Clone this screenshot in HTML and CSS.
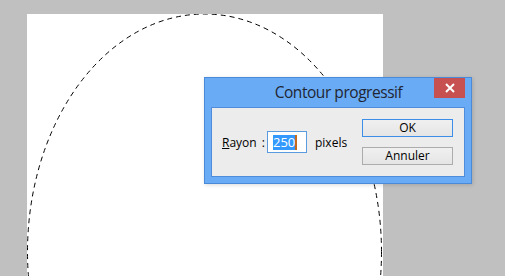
FILE: index.html
```html
<!doctype html>
<html>
  <head>
    <meta charset="UTF-8" />
    <link rel="stylesheet" href="styles.css">
  </head>
  <body>
    <div class="workspace">
      <div class="document">
        <svg class="selection" width="356" height="262" viewBox="0 0 356 262">
          <ellipse cx="177.5" cy="238" rx="177" ry="238" fill="none" stroke="#000" stroke-width="1" stroke-dasharray="5 4" />
        </svg>
      </div>
    </div>
    <div class="dialog">
      <div class="titlebar">
        <div class="title">Contour progressif</div>
        <div class="close">
          <svg width="10" height="10" viewBox="0 0 10 10">
            <path d="M1 1 L9 9 M9 1 L1 9" stroke="#fff" stroke-width="2" />
          </svg>
        </div>
      </div>
      <div class="panel">
        <label class="field-label"><u>R</u>ayon&nbsp;:</label>
        <div class="field-input"><span class="selected">250</span><span class="caret"></span></div>
        <div class="field-unit">pixels</div>
        <div class="buttons">
          <div class="button button-default">OK</div>
          <div class="button">Annuler</div>
        </div>
      </div>
    </div>
  </body>
</html>
```

FILE: styles.css
```css
html,
body {
  height: 100%;
}
body {
  background: #c0c0c0;
  margin: 0;
  overflow: hidden;
  font-family: "Open Sans", "Noto Sans", sans-serif;
}
.workspace {
  padding: 14px 0 0 27px;
}
.document {
  background: white;
  width: 356px;
  height: 262px;
}
.selection {
  display: block;
}
.dialog {
  position: absolute;
  left: 204px;
  top: 77px;
  width: 266px;
  height: 105px;
  background: #6aabf5;
  border: 1px solid #4a8ad9;
  box-shadow: 1px 1px 4px rgba(0, 0, 0, 0.15);
  display: flex;
  flex-direction: column;
}
.titlebar {
  height: 29px;
  display: flex;
  position: relative;
}
.title {
  flex-grow: 1;
  text-align: center;
  font-size: 15.5px;
  letter-spacing: -0.45px;
  line-height: 28px;
  color: #1e2633;
  padding-left: 1px;
}
.close {
  position: absolute;
  top: 0;
  right: 6px;
  width: 31px;
  height: 20px;
  background: #c75050;
  display: flex;
  align-items: center;
  justify-content: center;
}
.panel {
  margin: 0 6px;
  height: 68px;
  background: #ececec;
  border: 1px solid #4f8ddc;
  display: flex;
  align-items: center;
  padding: 0 11px 0 10px;
  font-size: 12px;
  color: #000;
}
.field-label {
  width: 45px;
  word-spacing: 2px;
}
.field-input {
  box-sizing: border-box;
  width: 40px;
  height: 22px;
  background: white;
  border: 1px solid #5a9be0;
  display: flex;
  align-items: center;
  padding-left: 5px;
}
.selected {
  background: #3399ff;
  color: white;
  line-height: 15px;
  font-size: 13px;
}
.caret {
  width: 2px;
  height: 15px;
  background: #c46a1c;
}
.field-unit {
  margin-left: 8px;
}
.buttons {
  margin-left: auto;
  display: flex;
  flex-direction: column;
  gap: 10px;
}
.button {
  box-sizing: border-box;
  width: 91px;
  height: 18px;
  border: 1px solid #acacac;
  background: linear-gradient(#f0f0f0, #e5e5e5);
  text-align: center;
  line-height: 16px;
  font-size: 12px;
}
.button-default {
  border-color: #3c8ee8;
}
```
